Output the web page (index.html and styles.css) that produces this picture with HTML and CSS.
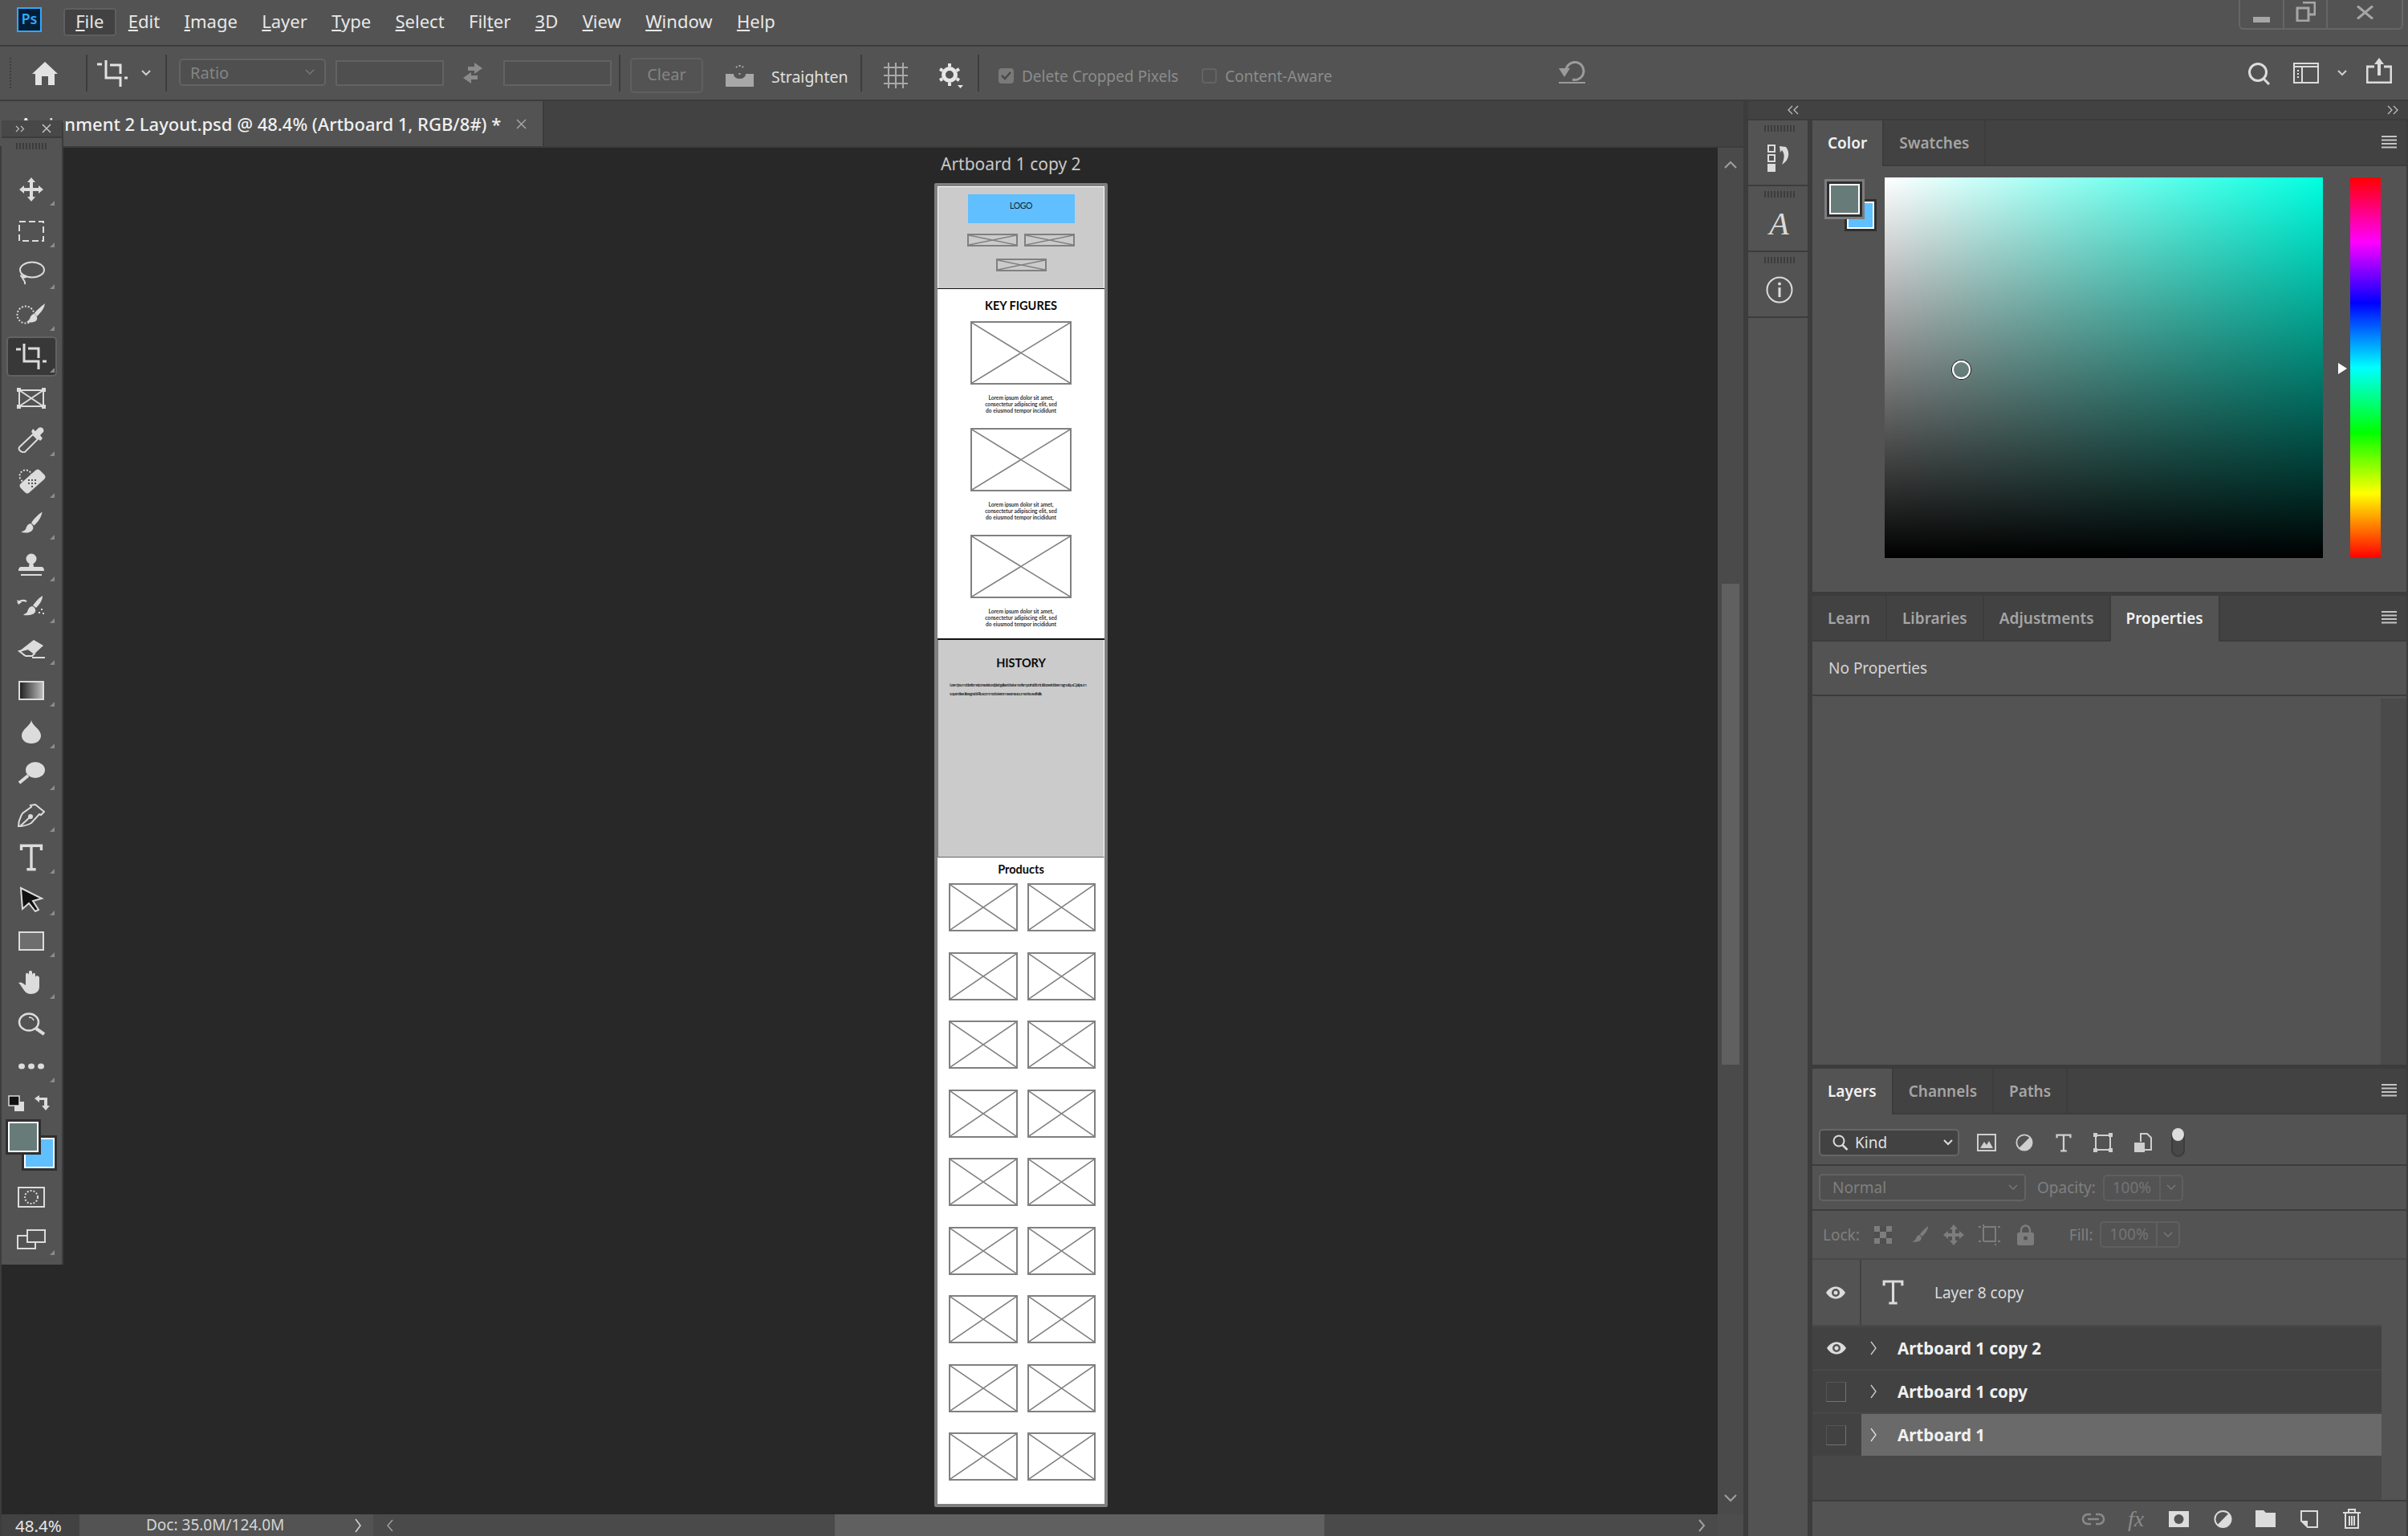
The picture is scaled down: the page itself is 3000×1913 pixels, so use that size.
FILE: index.html
```html
<!DOCTYPE html>
<html lang="en">
  <head>
    <meta charset="utf-8">
    <title>Photoshop</title>
    <link rel="stylesheet" href="styles.css">
  </head>
  <body>
    <svg class="defs" width="0" height="0">
      <symbol id="cross" viewBox="0 0 100 100" preserveAspectRatio="none">
        <path d="M0 0L100 100M100 0L0 100" fill="none" stroke="#808080" stroke-width="1.5" vector-effect="non-scaling-stroke"/>
      </symbol>
      <symbol id="brush" viewBox="0 0 40 40">
        <path d="M36 3c-5 3-13 11-16 16l4 4c5-4 11-12 12-20zM19 20c-5 1-6 5-7 8-1 2-4 3-7 5 7 1 14 1 17-4 2-3 0-7-3-9z" fill="currentColor"/>
      </symbol>
      <symbol id="burger" viewBox="0 0 20 16">
        <path d="M0 1h19M0 5.5h19M0 10h19M0 14.5h19" stroke="currentColor" stroke-width="2"/>
      </symbol>
      <symbol id="eye" viewBox="0 0 26 18">
        <path d="M1 9c6-10 18-10 24 0-6 10-18 10-24 0z" fill="#dcdcdc"/>
        <circle cx="13" cy="9" r="5" fill="#535353"/>
        <circle cx="13" cy="9" r="2.5" fill="#dcdcdc"/>
      </symbol>
      <symbol id="halfcircle" viewBox="0 0 24 24">
        <circle cx="12" cy="12" r="10.5" fill="none" stroke="currentColor" stroke-width="2"/>
        <path d="M4.5 19.5L19.5 4.5a10.5 10.5 0 0 1-15 15z" fill="currentColor"/>
      </symbol>
      <symbol id="typeT" viewBox="0 0 26 30">
        <path d="M2 7V2h22v5M13 2v26M8 28h10" fill="none" stroke="currentColor" stroke-width="3"/>
      </symbol>
    </svg>

    <header class="menubar">
      <div class="ps-logo">Ps</div>
      <nav class="menu">
        <span class="menu-item active"><u>F</u>ile</span>
        <span class="menu-item"><u>E</u>dit</span>
        <span class="menu-item"><u>I</u>mage</span>
        <span class="menu-item"><u>L</u>ayer</span>
        <span class="menu-item"><u>T</u>ype</span>
        <span class="menu-item"><u>S</u>elect</span>
        <span class="menu-item">Fil<u>t</u>er</span>
        <span class="menu-item"><u>3</u>D</span>
        <span class="menu-item"><u>V</u>iew</span>
        <span class="menu-item"><u>W</u>indow</span>
        <span class="menu-item"><u>H</u>elp</span>
      </nav>
      <div class="winbtns">
        <span class="winbtn win-min"><svg width="22" height="10"><rect y="2" width="21" height="7" fill="#a6a6a6"/></svg></span>
        <span class="winbtn win-max"><svg width="25" height="25" viewBox="0 0 25 25"><path d="M9 1h15v15h-8M2 8h14v16H2z" fill="none" stroke="#a6a6a6" stroke-width="3"/></svg></span>
        <span class="winbtn win-close"><svg width="21" height="17" viewBox="0 0 21 17"><path d="M1 0.5L20 16.5M20 0.5L1 16.5" stroke="#a6a6a6" stroke-width="3"/></svg></span>
      </div>
    </header>

    <section class="optionsbar">
      <div class="opt-grip"></div>
      <svg class="opt-home" width="32" height="29" viewBox="0 0 32 29"><path d="M16 0L32 15h-4v14h-8V18h-8v11H4V15H0z" fill="#e2e2e2"/></svg>
      <i class="opt-sep sep-home"></i>
      <svg class="opt-crop" width="38" height="33" viewBox="0 0 38 33"><path d="M0 5h6M11 0v22h18v11M16 6h13v11M34 22h4" fill="none" stroke="#e2e2e2" stroke-width="3"/></svg>
      <svg class="opt-chev" width="12" height="8" viewBox="0 0 12 8"><path d="M1 1l5 5 5-5" fill="none" stroke="#cfcfcf" stroke-width="2"/></svg>
      <i class="opt-sep sep-crop"></i>
      <div class="dim-select">Ratio<svg width="12" height="8" viewBox="0 0 12 8"><path d="M1 1l5 5 5-5" fill="none" stroke="#777" stroke-width="1.5"/></svg></div>
      <div class="dim-input first"></div>
      <svg class="opt-swap" width="28" height="26" viewBox="0 0 28 26"><path d="M16 0l10 7-10 7v-4H8V5h8zM12 12v4h8v5h-8v5L2 19z" fill="#8b8b8b"/></svg>
      <div class="dim-input second"></div>
      <i class="opt-sep sep-input"></i>
      <div class="clear-btn">Clear</div>
      <svg class="opt-level" width="35" height="27" viewBox="0 0 35 27"><path d="M0 11h10c0 8 15 8 15 0h10v16H0z" fill="#a8a8a8"/><path d="M13 3a6 6 0 0 1 9 0M17.5 12v-3" fill="none" stroke="#a8a8a8" stroke-width="2" stroke-dasharray="2 2"/></svg>
      <span class="opt-label">Straighten</span>
      <i class="opt-sep sep-level"></i>
      <svg class="opt-grid" width="30" height="32" viewBox="0 0 30 32"><path d="M6 0v32M15 0v32M24 0v32M0 6h30M0 16h30M0 26h30" fill="none" stroke="#a8a8a8" stroke-width="2"/></svg>
      <svg class="opt-gear" width="30" height="32" viewBox="0 0 30 32"><circle cx="13" cy="15" r="7.5" fill="none" stroke="#e6e6e6" stroke-width="5"/><path d="M13 1v28M1 8l24 14M25 8L1 22" stroke="#e6e6e6" stroke-width="4" stroke-dasharray="4 20"/><path d="M23 28h7l-3.5 4z" fill="#e6e6e6"/></svg>
      <i class="opt-sep sep-gear"></i>
      <span class="check on"><svg width="13" height="11" viewBox="0 0 13 11"><path d="M1 5l4 4 7-8" fill="none" stroke="#4a4a4a" stroke-width="2.5"/></svg></span>
      <span class="opt-dim label-delete">Delete Cropped Pixels</span>
      <span class="check off"></span>
      <span class="opt-dim label-content">Content-Aware</span>
      <svg class="opt-undo" width="34" height="28" viewBox="0 0 34 28"><path d="M10 13a11 11 0 1 1 8 10" fill="none" stroke="#9b9b9b" stroke-width="3"/><path d="M1 9h14l-7 11z" fill="#9b9b9b"/><path d="M1 27h33" stroke="#9b9b9b" stroke-width="2"/></svg>
      <svg class="opt-search" width="29" height="29" viewBox="0 0 29 29"><circle cx="13" cy="13" r="10.5" fill="none" stroke="#dcdcdc" stroke-width="3"/><path d="M20 21l7 7" stroke="#dcdcdc" stroke-width="3"/></svg>
      <svg class="opt-work" width="32" height="26" viewBox="0 0 32 26"><path d="M1 1h30v24H1zM1 5h30M11 5v20" fill="none" stroke="#dcdcdc" stroke-width="2"/><path d="M5 10h2M5 14h2M5 18h2" stroke="#dcdcdc" stroke-width="2"/></svg>
      <svg class="opt-chev2" width="12" height="8" viewBox="0 0 12 8"><path d="M1 1l5 5 5-5" fill="none" stroke="#cfcfcf" stroke-width="2"/></svg>
      <svg class="opt-share" width="32" height="32" viewBox="0 0 32 32"><path d="M10 11H1v20h30V11h-9" fill="none" stroke="#dcdcdc" stroke-width="3"/><path d="M16 0l6 8h-4v14h-4V8h-4z" fill="#dcdcdc"/></svg>
    </section>

    <main class="workspace">
      <div class="doc">
        <div class="tabbar">
          <div class="doc-tab">
            <span class="doc-title">Assignment 2 Layout.psd @ 48.4% (Artboard 1, RGB/8#) *</span>
            <svg width="13" height="13" viewBox="0 0 13 13"><path d="M1 1l11 11M12 1L1 12" stroke="#a5a5a5" stroke-width="1.5"/></svg>
          </div>
        </div>
        <div class="stage">
          <div class="canvas">
            <div class="artboard-label">Artboard 1 copy 2</div>
            <div class="artboard">
              <div class="ab-head">
                <div class="ab-logo">LOGO</div>
                <div class="ab-nav">
                  <svg class="ph"><use href="#cross"/></svg>
                  <svg class="ph"><use href="#cross"/></svg>
                  <svg class="ph"><use href="#cross"/></svg>
                </div>
              </div>
              <div class="ab-figures">
                <h2 class="ab-title">KEY FIGURES</h2>
                <div class="figure">
                  <svg class="ph"><use href="#cross"/></svg>
                  <p>Lorem ipsum dolor sit amet,<br>consectetur adipiscing elit, sed<br>do eiusmod tempor incididunt</p>
                </div>
                <div class="figure">
                  <svg class="ph"><use href="#cross"/></svg>
                  <p>Lorem ipsum dolor sit amet,<br>consectetur adipiscing elit, sed<br>do eiusmod tempor incididunt</p>
                </div>
                <div class="figure">
                  <svg class="ph"><use href="#cross"/></svg>
                  <p>Lorem ipsum dolor sit amet,<br>consectetur adipiscing elit, sed<br>do eiusmod tempor incididunt</p>
                </div>
              </div>
              <div class="ab-history">
                <h2 class="ab-title">HISTORY</h2>
                <p>Lorem ipsum dolor sit amet, consectetur adipiscing elit, sed do eiusmod tempor incididunt ut labore et dolore magna aliqua. Quis ipsum<br>suspendisse ultrices gravida. Risus commodo viverra maecenas accumsan lacus vel facilisis.</p>
              </div>
              <div class="ab-products">
                <h2 class="ab-title">Products</h2>
                <div class="product-grid">
                  <svg class="ph"><use href="#cross"/></svg><svg class="ph"><use href="#cross"/></svg>
                  <svg class="ph"><use href="#cross"/></svg><svg class="ph"><use href="#cross"/></svg>
                  <svg class="ph"><use href="#cross"/></svg><svg class="ph"><use href="#cross"/></svg>
                  <svg class="ph"><use href="#cross"/></svg><svg class="ph"><use href="#cross"/></svg>
                  <svg class="ph"><use href="#cross"/></svg><svg class="ph"><use href="#cross"/></svg>
                  <svg class="ph"><use href="#cross"/></svg><svg class="ph"><use href="#cross"/></svg>
                  <svg class="ph"><use href="#cross"/></svg><svg class="ph"><use href="#cross"/></svg>
                  <svg class="ph"><use href="#cross"/></svg><svg class="ph"><use href="#cross"/></svg>
                  <svg class="ph"><use href="#cross"/></svg><svg class="ph"><use href="#cross"/></svg>
                </div>
              </div>
            </div>
          </div>
          <div class="vscroll">
            <svg width="16" height="10" viewBox="0 0 16 10"><path d="M1 9l7-7 7 7" fill="none" stroke="#a0a0a0" stroke-width="2"/></svg>
            <div class="vthumb"></div>
            <svg width="16" height="10" viewBox="0 0 16 10"><path d="M1 1l7 7 7-7" fill="none" stroke="#a0a0a0" stroke-width="2"/></svg>
          </div>
        </div>
        <div class="statusbar">
          <div class="zoom-val">48.4%</div>
          <div class="doc-size">Doc: 35.0M/124.0M
            <svg width="8" height="18" viewBox="0 0 8 18"><path d="M1 1l6 8-6 8" fill="none" stroke="#d5d5d5" stroke-width="1.5"/></svg>
          </div>
          <div class="hscroll">
            <svg width="9" height="16" viewBox="0 0 9 16"><path d="M8 1L2 8l6 7" fill="none" stroke="#a0a0a0" stroke-width="1.5"/></svg>
            <div class="hthumb"></div>
            <svg width="9" height="16" viewBox="0 0 9 16"><path d="M1 1l6 7-6 7" fill="none" stroke="#a0a0a0" stroke-width="2"/></svg>
          </div>
          <div class="corner"></div>
        </div>
      </div>

      <div class="side">
        <div class="collapse-strip">
          <svg class="coll-left" width="14" height="12" viewBox="0 0 14 12"><path d="M6 1L1 6l5 5M13 1L8 6l5 5" fill="none" stroke="#bdbdbd" stroke-width="1.3"/></svg>
          <svg class="coll-right" width="14" height="12" viewBox="0 0 14 12"><path d="M1 1l5 5-5 5M8 1l5 5-5 5" fill="none" stroke="#bdbdbd" stroke-width="1.3"/></svg>
        </div>
        <div class="side-body">
          <div class="dock">
            <div class="dock-item">
              <div class="grip"></div>
              <svg width="30" height="34" viewBox="0 0 30 34"><path d="M1 1h8v8H1zM1 13h8v8H1z" fill="none" stroke="#dcdcdc" stroke-width="2"/><rect y="24" width="10" height="10" fill="#dcdcdc"/><path d="M15 2l8 1c5 6 5 16-5 22 3-7 4-13 0-18l-2 3z" fill="#dcdcdc"/></svg>
            </div>
            <div class="dock-item">
              <div class="grip"></div>
              <span class="dock-a">A</span>
            </div>
            <div class="dock-item">
              <div class="grip"></div>
              <svg width="34" height="34" viewBox="0 0 34 34"><circle cx="17" cy="17" r="15.5" fill="none" stroke="#dcdcdc" stroke-width="2"/><path d="M17 14v12" stroke="#dcdcdc" stroke-width="3"/><circle cx="17" cy="9.5" r="2" fill="#dcdcdc"/></svg>
            </div>
            <div class="dock-rest"></div>
          </div>

          <div class="panels">
            <section class="panel panel-color">
              <div class="tabs">
                <span class="tab on">Color</span>
                <span class="tab">Swatches</span>
                <svg class="burger"><use href="#burger"/></svg>
              </div>
              <div class="color-body">
                <div class="swatch-pair">
                  <span class="sw-bg"></span>
                  <span class="sw-fg"></span>
                </div>
                <div class="color-field"><span class="color-pick"></span></div>
                <div class="hue-bar"><span class="hue-mark"></span></div>
              </div>
            </section>

            <section class="panel panel-props">
              <div class="tabs">
                <span class="tab">Learn</span>
                <span class="tab">Libraries</span>
                <span class="tab">Adjustments</span>
                <span class="tab on">Properties</span>
                <svg class="burger"><use href="#burger"/></svg>
              </div>
              <div class="props-head">No Properties</div>
              <div class="props-body"><div class="props-strip"></div></div>
            </section>

            <section class="panel panel-layers">
              <div class="tabs">
                <span class="tab on">Layers</span>
                <span class="tab">Channels</span>
                <span class="tab">Paths</span>
                <svg class="burger"><use href="#burger"/></svg>
              </div>
              <div class="row-kind">
                <div class="kind-select">
                  <svg width="20" height="20" viewBox="0 0 20 20"><circle cx="8" cy="8" r="6.5" fill="none" stroke="#dcdcdc" stroke-width="2"/><path d="M12.5 13l6 6" stroke="#dcdcdc" stroke-width="2.5"/></svg>
                  <span>Kind</span>
                  <svg class="sel-chev" width="12" height="8" viewBox="0 0 12 8"><path d="M1 1l5 5 5-5" fill="none" stroke="#dcdcdc" stroke-width="2"/></svg>
                </div>
                <svg class="ki ki-img" width="24" height="24" viewBox="0 0 24 24"><path d="M1 2h22v20H1z" fill="none" stroke="#cfcfcf" stroke-width="2"/><path d="M4 19l5-8 3 4 3-5 5 9z" fill="#cfcfcf"/></svg>
                <svg class="ki ki-adj" width="22" height="24"><use href="#halfcircle"/></svg>
                <svg class="ki ki-t" width="20" height="23"><use href="#typeT"/></svg>
                <svg class="ki ki-shape" width="24" height="24" viewBox="0 0 24 24"><path d="M3 3h18v18H3z" fill="none" stroke="#cfcfcf" stroke-width="2"/><path d="M0 0h5v5H0zM19 0h5v5h-5zM0 19h5v5H0zM19 19h5v5h-5z" fill="#cfcfcf"/></svg>
                <svg class="ki ki-smart" width="22" height="24" viewBox="0 0 22 24"><path d="M8 11V1h8l5 5v15h-8" fill="none" stroke="#cfcfcf" stroke-width="2"/><rect y="12" width="13" height="12" fill="#cfcfcf"/></svg>
                <span class="ki-toggle"></span>
              </div>
              <div class="row-blend">
                <div class="blend-select">Normal<svg width="12" height="8" viewBox="0 0 12 8"><path d="M1 1l5 5 5-5" fill="none" stroke="#777" stroke-width="1.5"/></svg></div>
                <span class="dim-label">Opacity:</span>
                <div class="num-field"><span>100%</span><i><svg width="12" height="8" viewBox="0 0 12 8"><path d="M1 1l5 5 5-5" fill="none" stroke="#777" stroke-width="1.5"/></svg></i></div>
              </div>
              <div class="row-lock">
                <span class="dim-label lock-label">Lock:</span>
                <svg class="li" width="22" height="22" viewBox="0 0 22 22"><rect width="22" height="22" fill="#7d7d7d"/><path d="M7 0h8v7H7zM15 7h7v8h-7zM0 7h7v8H0zM7 15h8v7H7z" fill="#4f4f4f"/></svg>
                <svg class="li li-brush" width="26" height="26"><use href="#brush"/></svg>
                <svg class="li li-move" width="26" height="26" viewBox="0 0 26 26"><path d="M13 0l5 6h-3v5h5V8l6 5-6 5v-3h-5v5h3l-5 6-5-6h3v-5H6v3l-6-5 6-5v3h5V6H8z" fill="#7d7d7d"/></svg>
                <svg class="li li-art" width="27" height="26" viewBox="0 0 27 26"><path d="M6 3h15v18H6" fill="none" stroke="#7d7d7d" stroke-width="2"/><path d="M6 3v18" stroke="#7d7d7d" stroke-width="2"/><path d="M0 3h3M24 3h3M0 21h3M24 21h3M6 0v2M21 24v2" stroke="#7d7d7d" stroke-width="2"/></svg>
                <svg class="li li-lock" width="21" height="26" viewBox="0 0 21 26"><path d="M5 11V7a5.5 5.5 0 0 1 11 0v4" fill="none" stroke="#7d7d7d" stroke-width="2.5"/><rect y="10" width="21" height="16" rx="2" fill="#7d7d7d"/><circle cx="10.5" cy="17" r="2.5" fill="#535353"/></svg>
                <span class="dim-label fill-label">Fill:</span>
                <div class="num-field"><span>100%</span><i><svg width="12" height="8" viewBox="0 0 12 8"><path d="M1 1l5 5 5-5" fill="none" stroke="#777" stroke-width="1.5"/></svg></i></div>
              </div>
              <div class="layer-list">
                <div class="layer layer-text">
                  <span class="vis"><svg width="26" height="18"><use href="#eye"/></svg></span>
                  <span class="thumb-t"><svg width="27" height="31"><use href="#typeT"/></svg></span>
                  <span class="layer-name">Layer 8 copy</span>
                </div>
                <div class="layer group">
                  <span class="vis"><svg width="26" height="18"><use href="#eye"/></svg></span>
                  <svg class="twist" width="8" height="18" viewBox="0 0 8 18"><path d="M1 1l6 8-6 8" fill="none" stroke="#cfcfcf" stroke-width="1.3"/></svg>
                  <span class="layer-name">Artboard 1 copy 2</span>
                </div>
                <div class="layer group">
                  <span class="vis"><i class="vis-box"></i></span>
                  <svg class="twist" width="8" height="18" viewBox="0 0 8 18"><path d="M1 1l6 8-6 8" fill="none" stroke="#cfcfcf" stroke-width="1.3"/></svg>
                  <span class="layer-name">Artboard 1 copy</span>
                </div>
                <div class="layer group selected">
                  <span class="vis"><i class="vis-box"></i></span>
                  <span class="sel-fill">
                    <svg class="twist" width="8" height="18" viewBox="0 0 8 18"><path d="M1 1l6 8-6 8" fill="none" stroke="#e0e0e0" stroke-width="1.3"/></svg>
                    <span class="layer-name">Artboard 1</span>
                  </span>
                </div>
              </div>
              <div class="layer-foot">
                <svg class="fi fi-link" width="30" height="16" viewBox="0 0 30 16"><path d="M12 2H8a6 6 0 0 0 0 12h4M18 2h4a6 6 0 0 1 0 12h-4M8 8h14" fill="none" stroke="#8a8a8a" stroke-width="2.5"/></svg>
                <span class="fi-fx">fx</span>
                <svg class="fi fi-mask" width="25" height="20" viewBox="0 0 25 20"><rect width="25" height="20" fill="#dcdcdc"/><circle cx="12.5" cy="10" r="6" fill="#535353"/></svg>
                <svg class="fi fi-adj" width="23" height="24"><use href="#halfcircle"/></svg>
                <svg class="fi fi-folder" width="25" height="21" viewBox="0 0 25 21"><path d="M0 0h10l3 3h12v18H0z" fill="#dcdcdc"/></svg>
                <svg class="fi fi-new" width="22" height="22" viewBox="0 0 22 22"><path d="M1 1h20v20H9L1 13z" fill="none" stroke="#dcdcdc" stroke-width="2"/><path d="M1 13h8v8z" fill="#dcdcdc"/></svg>
                <svg class="fi fi-trash" width="22" height="25" viewBox="0 0 22 25"><path d="M0 5h22M7 4V1h8v3M3 6v18h16V6M8 9v12M11 9v12M14 9v12" fill="none" stroke="#dcdcdc" stroke-width="2"/></svg>
              </div>
            </section>
          </div>
        </div>
      </div>

      <aside class="toolbar">
        <div class="tb-head">
          <svg width="12" height="9" viewBox="0 0 12 9"><path d="M1 1l3.5 3.5L1 8M7 1l3.5 3.5L7 8" fill="none" stroke="#bdbdbd" stroke-width="1.2"/></svg>
          <svg width="12" height="12" viewBox="0 0 12 12"><path d="M1 1l10 10M11 1L1 11" stroke="#c5c5c5" stroke-width="1.5"/></svg>
        </div>
        <div class="tb-grip"><div class="grip"></div></div>
        <div class="tool more"><svg width="32" height="32" viewBox="0 0 32 32"><path d="M16 1l5 6h-3v7h7v-3l6 5-6 5v-3h-7v7h3l-5 6-5-6h3v-7H7v3l-6-5 6-5v3h7V7h-3z" fill="#dcdcdc"/></svg></div>
        <div class="tool more"><svg width="32" height="26" viewBox="0 0 32 26"><rect x="1" y="1" width="30" height="24" fill="none" stroke="#dcdcdc" stroke-width="2" stroke-dasharray="8 4"/></svg></div>
        <div class="tool more"><svg width="34" height="30" viewBox="0 0 34 30"><ellipse cx="18" cy="11" rx="15" ry="9.5" fill="none" stroke="#dcdcdc" stroke-width="2"/><path d="M5 17c-3 3 3 4 5 3s-5-3-4 1 4 3 3 8" fill="none" stroke="#dcdcdc" stroke-width="2"/></svg></div>
        <div class="tool more"><svg width="38" height="30" viewBox="0 0 38 30"><circle cx="12" cy="15" r="10.5" fill="none" stroke="#dcdcdc" stroke-width="2" stroke-dasharray="2 2"/><path d="M36 1c-4 3-10 8-13 12l3 4c4-4 9-9 10-16zM22 14c-3 1-4 3-5 6-1 2-3 3-4 4 5 1 11 1 13-3 1-3-1-6-4-7z" fill="#dcdcdc"/></svg></div>
        <div class="tool more on"><svg width="38" height="32" viewBox="0 0 38 32"><path d="M0 7h6M10 0v22h18v10M15 6h13v12M33 22h5" fill="none" stroke="#dcdcdc" stroke-width="3"/></svg></div>
        <div class="tool"><svg width="36" height="26" viewBox="0 0 36 26"><path d="M3 3h30v20H3zM3 3l30 20M33 3L3 23" fill="none" stroke="#dcdcdc" stroke-width="2"/><path d="M0 0h5v5H0zM31 0h5v5h-5zM0 21h5v5H0zM31 21h5v5h-5z" fill="#dcdcdc"/></svg></div>
        <div class="tool more"><svg width="34" height="32" viewBox="0 0 34 32"><path d="M2 25L19 9l6 6L9 31c-3 1-9-2-7-6z" fill="none" stroke="#dcdcdc" stroke-width="2"/><path d="M17 6l11 11 3-3-3-4 4-4c2-4-3-7-6-5l-4 4-3-3z" fill="#dcdcdc"/></svg></div>
        <div class="tool more"><svg width="36" height="32" viewBox="0 0 36 32"><circle cx="11" cy="9" r="7.5" fill="none" stroke="#dcdcdc" stroke-width="2" stroke-dasharray="2 2"/><path d="M29 2l5 5c2 2 2 4 0 6L16 29c-2 2-4 2-6 0l-5-5c-2-2-2-4 0-6L23 2c2-2 4-2 6 0z" fill="#dcdcdc"/><path d="M14 18h2M18 14h2M18 18h2M22 18h2M18 22h2M14 14h2M22 14h2" stroke="#535353" stroke-width="2"/></svg></div>
        <div class="tool more"><svg width="34" height="34"><use href="#brush"/></svg></div>
        <div class="tool more"><svg width="32" height="30" viewBox="0 0 32 30"><circle cx="16" cy="7" r="6.5" fill="#dcdcdc"/><path d="M14 10h4l1 7h9c3 0 4 2 4 5H0c0-3 1-5 4-5h9z" fill="#dcdcdc"/><path d="M3 27h26" stroke="#dcdcdc" stroke-width="2"/></svg></div>
        <div class="tool more"><svg width="36" height="30" viewBox="0 0 36 30"><path d="M32 1c-4 2-9 8-12 12l4 3c4-4 8-9 8-15zM19 14c-4 1-5 4-6 7-1 2-3 2-5 4 6 1 13 0 15-4 1-3-1-6-4-7z" fill="#dcdcdc"/><path d="M1 10c3-3 7-4 11-2" fill="none" stroke="#dcdcdc" stroke-width="2"/><path d="M0 6l2 6 4-3z" fill="#dcdcdc"/><path d="M30 18h2M27 22h2M32 23h2" stroke="#dcdcdc" stroke-width="2"/></svg></div>
        <div class="tool more"><svg width="34" height="24" viewBox="0 0 34 24"><path d="M2 15L20 1l12 7-14 13H8z" fill="#dcdcdc"/><path d="M2 15l8 6h8l3-3-8-6z" fill="#535353" stroke="#dcdcdc" stroke-width="2"/><path d="M18 23h16" stroke="#dcdcdc" stroke-width="2"/></svg></div>
        <div class="tool more"><span class="gradient-swatch"></span></div>
        <div class="tool more"><svg width="24" height="30" viewBox="0 0 24 30"><path d="M12 0c1 7 12 11 12 19 0 6-5 10-12 10S0 25 0 19C0 11 11 7 12 0z" fill="#dcdcdc"/></svg></div>
        <div class="tool more"><svg width="34" height="32" viewBox="0 0 34 32"><ellipse cx="22" cy="11" rx="12" ry="10" fill="#dcdcdc"/><path d="M13 18L2 27" stroke="#dcdcdc" stroke-width="4"/></svg></div>
        <div class="tool more"><svg width="34" height="30" viewBox="0 0 34 30"><path d="M22 1l11 9-4 4-2-1-10 11c-5 3-11 4-16 4 0-5 2-11 5-16l11-8-1-2z" fill="none" stroke="#dcdcdc" stroke-width="2"/><path d="M3 28l12-11" stroke="#dcdcdc" stroke-width="2"/><circle cx="16" cy="16" r="3" fill="#dcdcdc"/></svg></div>
        <div class="tool more"><svg width="30" height="34"><use href="#typeT"/></svg></div>
        <div class="tool more"><svg width="32" height="32" viewBox="0 0 32 32"><path d="M3 2l26 13-11 3 7 11-4 2-8-10-8 7z" fill="#111" stroke="#dcdcdc" stroke-width="2"/></svg></div>
        <div class="tool more"><svg width="32" height="24" viewBox="0 0 32 24"><rect x="1" y="1" width="30" height="22" fill="#6e6e6e" stroke="#dcdcdc" stroke-width="2"/></svg></div>
        <div class="tool more"><svg width="32" height="30" viewBox="0 0 32 30"><path d="M0 15c4-2 7 2 9 3V5c0-3 3-3 4 0V2c0-3 4-3 4 0v3c1-3 4-3 4 0v3c1-3 5-2 5 1v11c0 6-5 9-11 9-8 0-10-10-15-14z" fill="#dcdcdc"/></svg></div>
        <div class="tool"><svg width="34" height="32" viewBox="0 0 34 32"><ellipse cx="14" cy="13" rx="12" ry="10.5" fill="none" stroke="#dcdcdc" stroke-width="2.5"/><path d="M23 21l10 7" stroke="#dcdcdc" stroke-width="4"/><path d="M14 7c3 0 5 1 6 4" fill="none" stroke="#dcdcdc" stroke-width="1.5"/></svg></div>
        <div class="tool more"><svg width="32" height="8" viewBox="0 0 32 8"><ellipse cx="4" cy="4" rx="4" ry="3.5" fill="#dcdcdc"/><ellipse cx="16" cy="4" rx="4" ry="3.5" fill="#dcdcdc"/><ellipse cx="28" cy="4" rx="4" ry="3.5" fill="#dcdcdc"/></svg></div>
        <div class="tb-swap">
          <svg width="20" height="20" viewBox="0 0 20 20"><rect x="8" y="8" width="12" height="12" fill="#dcdcdc"/><rect x="1" y="1" width="13" height="12" fill="#111" stroke="#dcdcdc" stroke-width="1.5"/></svg>
          <svg width="20" height="20" viewBox="0 0 20 20"><path d="M0 4l6-4v3h10v10h3l-5 6-5-6h3V6H6v3z" fill="#dcdcdc"/></svg>
        </div>
        <div class="tb-colors">
          <span class="sw-bg big"></span>
          <span class="sw-fg big"></span>
        </div>
        <div class="tool"><svg width="34" height="26" viewBox="0 0 34 26"><rect x="1" y="1" width="32" height="24" fill="none" stroke="#dcdcdc" stroke-width="2"/><circle cx="17" cy="13" r="8" fill="none" stroke="#dcdcdc" stroke-width="2" stroke-dasharray="2 2"/></svg></div>
        <div class="tool more"><svg width="36" height="26" viewBox="0 0 36 26"><path d="M13 2h22v15H13zM13 9H1v16h22v-8" fill="none" stroke="#dcdcdc" stroke-width="2"/></svg></div>
      </aside>
    </main>
  </body>
</html>
```

FILE: styles.css
```css
* { box-sizing: border-box; }
html, body { margin: 0; height: 100%; }
body {
  width: 3000px;
  height: 1913px;
  overflow: hidden;
  background: #3c3c3c;
  color: #e6e6e6;
  font-family: "Noto Sans", "Open Sans", sans-serif;
  font-size: 20px;
  display: flex;
  flex-direction: column;
}
.defs { position: absolute; }
svg { display: block; flex: none; }

/* menu bar */
.menubar {
  height: 56px;
  background: #535353;
  display: flex;
  align-items: flex-start;
  flex: none;
}
.ps-logo {
  width: 31px;
  height: 31px;
  margin: 9px 27px 0 21px;
  background: #001e36;
  border: 2px solid #31a8ff;
  color: #31a8ff;
  font-size: 18px;
  font-weight: 600;
  line-height: 25px;
  text-align: center;
}
.menu { display: flex; margin-top: 10px; }
.menu-item {
  height: 35px;
  padding: 0 15.2px;
  font-size: 22px;
  line-height: 33px;
  color: #e8e8e8;
}
.menu-item.active {
  background: #424242;
  box-shadow: inset 0 0 0 2px #5f5f5f;
  border-radius: 4px;
}
.winbtns {
  margin-left: auto;
  margin-right: 6px;
  width: 205px;
  height: 37px;
  display: flex;
  border: 2px solid #666;
  border-top: 0;
  border-radius: 0 0 6px 6px;
}
.winbtn { display: flex; align-items: center; justify-content: center; border-right: 2px solid #666; }
.win-min { width: 55px; padding-top: 12px; }
.win-max { width: 54px; padding-bottom: 6px; }
.win-close { flex: 1; border-right: 0; padding-bottom: 4px; }

/* options bar */
.optionsbar {
  height: 66px;
  margin-top: 2px;
  background: #535353;
  display: flex;
  align-items: center;
  flex: none;
  color: #e0e0e0;
}
.opt-grip {
  width: 2px;
  height: 38px;
  margin-left: 12px;
  background: repeating-linear-gradient(180deg, #3c3c3c 0 2px, transparent 2px 4px);
}
.opt-home { margin-left: 26px; }
.opt-sep { display: block; width: 2px; height: 46px; background: #3c3c3c; flex: none; }
.sep-home { margin-left: 35px; }
.opt-crop { margin-left: 12px; }
.opt-chev { margin-left: 17px; }
.sep-crop { margin-left: 18px; }
.dim-select {
  width: 183px;
  height: 34px;
  margin: -2px 0 0 15px;
  padding: 0 12px;
  border: 2px solid #636363;
  border-radius: 5px;
  background: #4f4f4f;
  display: flex;
  align-items: center;
  justify-content: space-between;
  color: #858585;
  font-size: 20px;
}
.dim-input {
  width: 135px;
  height: 32px;
  border: 2px solid #636363;
  background: #4f4f4f;
}
.dim-input.first { margin-left: 12px; }
.opt-swap { margin-left: 22px; margin-right: 24px; }
.sep-input { margin-left: 9px; }
.clear-btn {
  width: 91px;
  height: 44px;
  margin: 6px 0 0 12px;
  border: 2px solid #5f5f5f;
  border-radius: 5px;
  color: #858585;
  font-size: 20px;
  line-height: 38px;
  text-align: center;
}
.opt-level { margin: 6px 0 0 28px; }
.opt-label { margin: 8px 0 0 22px; font-size: 19.5px; width: 93px; white-space: nowrap; }
.sep-level { margin-left: 18px; }
.opt-grid { margin: 6px 0 0 27px; }
.opt-gear { margin: 6px 0 0 39px; }
.sep-gear { margin-left: 18px; }
.check {
  width: 19px;
  height: 19px;
  margin-top: 7px;
  border-radius: 4px;
  display: flex;
  align-items: center;
  justify-content: center;
  flex: none;
}
.check.on { margin-left: 24px; background: #7a7a7a; }
.check.off { margin-left: 29px; border: 2px solid #636363; }
.opt-dim { margin: 8px 0 0 10px; color: #8c8c8c; font-size: 19px; white-space: nowrap; }
.opt-undo { margin: -3px 0 0 281px; }
.opt-search { margin-left: 825px; }
.opt-work { margin-left: 28px; }
.opt-chev2 { margin-left: 23px; }
.opt-share { margin: -6px 0 0 24px; }

/* workspace */
.workspace {
  height: 1787px;
  margin-top: 2px;
  display: flex;
  flex: none;
  position: relative;
}
.doc { width: 2172px; display: flex; flex-direction: column; flex: none; }
.tabbar { height: 56px; background: #424242; flex: none; }
.doc-tab {
  width: 678px;
  height: 56px;
  background: #535353;
  border-right: 2px solid #3c3c3c;
  padding-left: 25px;
  display: flex;
  align-items: center;
  gap: 19px;
}
.doc-title { font-size: 22px; font-weight: 500; color: #f0f0f0; white-space: nowrap; }
.stage { height: 1702px; margin-top: 2px; display: flex; flex: none; }
.canvas {
  width: 2140px;
  background: #282828;
  border-left: 2px solid #3c3c3c;
  padding-left: 1162px;
  overflow: hidden;
}
.artboard-label {
  height: 44px;
  padding: 7px 0 0 8px;
  font-size: 21px;
  line-height: 26px;
  color: #c9c9c9;
  white-space: nowrap;
}
.vscroll {
  width: 32px;
  background: #4a4a4a;
  display: flex;
  flex-direction: column;
  align-items: center;
  padding-top: 16px;
}
.vthumb { width: 22px; height: 599px; margin: 517px 0 535px; background: #606060; }

/* artboard content */
.artboard {
  width: 216px;
  height: 1649px;
  border: 4px solid #7f7f7f;
  border-radius: 2px;
  background: #fff;
  font-family: Lato, "Open Sans", sans-serif;
  color: #111;
  display: flex;
  flex-direction: column;
}
.ph { border: 2px solid #808080; background: transparent; overflow: hidden; }
.ab-head { height: 127px; background: #cbcbcb; padding-top: 9px; border: 1px solid #fff; border-bottom: 0; flex: none; }
.ab-logo {
  width: 133px;
  height: 36px;
  margin: 0 auto;
  background: #5fbfff;
  color: #123;
  font-size: 10.5px;
  letter-spacing: -0.4px;
  line-height: 29px;
  text-align: center;
}
.ab-nav {
  width: 134px;
  margin: 13px auto 0;
  display: flex;
  flex-wrap: wrap;
  justify-content: center;
  gap: 15px 8px;
}
.ab-nav .ph { width: 63px; height: 16px; }
.ab-title { margin: 0; font-size: 14.5px; font-weight: 700; line-height: 20px; text-align: center; color: #0a0a0a; }
.ab-figures {
  height: 438px;
  padding-top: 11px;
  border-top: 1px solid #111;
  border-bottom: 2px solid #111;
  flex: none;
}
.ab-figures .ab-title { margin-bottom: 9px; }
.figure { height: 133px; }
.figure .ph { width: 126px; height: 79px; margin: 0 auto; }
.figure p {
  margin: 12px 0 0;
  font-size: 6.6px;
  font-weight: 700;
  line-height: 8px;
  text-align: center;
  color: #333;
}
.ab-history { height: 271px; background: #cbcbcb; padding-top: 19px; flex: none; border-right: 1px solid #fff; border-left: 1px solid #7f7f7f; border-bottom: 1px solid #666; }
.ab-history p {
  margin: 11px 0 0 14px;
  font-size: 6px;
  line-height: 11px;
  letter-spacing: -1.37px;
  white-space: nowrap;
  color: #333;
}
.ab-products { flex: 1; padding-top: 5px; }
.product-grid {
  margin: 7px 0 0 14px;
  display: grid;
  grid-template-columns: 86px 85px;
  grid-auto-rows: 60px;
  gap: 25.5px 12px;
}
.product-grid .ph { width: 100%; height: 100%; }

/* status bar */
.statusbar { height: 27px; display: flex; flex: none; overflow: hidden; }
.zoom-val {
  width: 99px;
  padding-left: 17px;
  background: #424242;
  border-left: 2px solid #3c3c3c;
  font-size: 20.5px;
  line-height: 29px;
  color: #e6e6e6;
}
.doc-size {
  width: 366px;
  padding-left: 83px;
  background: #535353;
  font-size: 19px;
  line-height: 29px;
  color: #d5d5d5;
  display: flex;
  align-items: center;
  white-space: nowrap;
}
.doc-size svg { margin-left: 88px; }
.hscroll {
  width: 1675px;
  background: #4a4a4a;
  display: flex;
  align-items: center;
  padding-left: 16px;
}
.hthumb { width: 610px; height: 27px; margin: 0 466px 0 550px; background: #606060; }
.corner { width: 32px; background: #4d4d4d; }

/* right side */
.side { width: 828px; padding-left: 6px; display: flex; flex-direction: column; flex: none; }
.collapse-strip {
  height: 22px;
  background: #424242;
  display: flex;
  align-items: center;
  justify-content: space-between;
  padding: 0 12px 0 49px;
  flex: none;
}
.side-body { height: 1763px; margin-top: 2px; display: flex; flex: none; }
.dock { width: 74px; margin-right: 6px; display: flex; flex-direction: column; gap: 2px; flex: none; }
.dock-item {
  height: 80px;
  background: #535353;
  padding: 6px 0 0 3px;
  display: flex;
  flex-direction: column;
  align-items: center;
  flex: none;
}
.dock-item svg { margin-top: 16px; }
.dock-a {
  margin-top: 11px;
  font-family: "Liberation Serif", serif;
  font-style: italic;
  font-size: 40px;
  line-height: 44px;
  color: #dcdcdc;
}
.dock-rest { flex: 1; background: #535353; }
.grip {
  width: 38px;
  height: 8px;
  background: repeating-linear-gradient(90deg, #3c3c3c 0 2px, transparent 2px 4px);
}

.panels { width: 740px; display: flex; flex-direction: column; flex: none; }
.panel { background: #535353; flex: none; display: flex; flex-direction: column; }
.panel-color { height: 587px; }
.panel-props { height: 584px; margin-top: 5px; }
.panel-layers { height: 582px; margin-top: 5px; }
.tabs {
  height: 57px;
  background: #424242;
  border-bottom: 2px solid #3c3c3c;
  display: flex;
  position: relative;
  flex: none;
}
.tab {
  padding: 0 19px;
  font-size: 19px;
  font-weight: 600;
  line-height: 56px;
  color: #a5a5a5;
  border-right: 2px solid #3c3c3c;
  white-space: nowrap;
}
.tab.on { background: #535353; color: #f2f2f2; height: 57px; }
.burger { position: absolute; right: 11px; top: 19px; width: 20px; height: 16px; color: #c5c5c5; }

.color-body { position: relative; flex: 1; }
.swatch-pair { position: absolute; left: 18px; top: 19px; width: 62px; height: 62px; }
.sw-fg, .sw-bg { position: absolute; display: block; border: 2px solid #fff; box-shadow: 0 0 0 3px #2f2f2f; }
.sw-fg { left: 3px; top: 3px; width: 38px; height: 38px; background: #677c79; outline: 3px solid #7d7d7d; outline-offset: 3px; }
.sw-bg { left: 25px; top: 25px; width: 34px; height: 34px; background: #5fbfff; }
.color-field {
  position: absolute;
  left: 90px;
  top: 14px;
  width: 546px;
  height: 474px;
  background:
    linear-gradient(to top, #000, rgba(0, 0, 0, 0)),
    linear-gradient(to right, #fff, #00ffe0);
}
.color-pick {
  position: absolute;
  left: 84px;
  top: 228px;
  width: 23px;
  height: 23px;
  border: 2px solid #fff;
  border-radius: 50%;
  box-shadow: 0 0 0 1px #222;
}
.hue-bar {
  position: absolute;
  left: 670px;
  top: 14px;
  width: 38px;
  height: 474px;
  background: linear-gradient(to bottom, #f00, #f0f 17%, #00f 33%, #0ff 50%, #0f0 67%, #ff0 83%, #f00);
}
.hue-mark {
  position: absolute;
  left: -15px;
  top: 231px;
  width: 0;
  height: 0;
  border-left: 11px solid #fff;
  border-top: 7px solid transparent;
  border-bottom: 7px solid transparent;
}

.props-head {
  height: 68px;
  padding-left: 20px;
  display: flex;
  align-items: center;
  font-size: 19px;
  color: #d5d5d5;
  border-bottom: 2px solid #3c3c3c;
  flex: none;
}
.props-body { flex: 1; display: flex; justify-content: flex-end; padding-top: 3px; }
.props-strip { width: 32px; background: #4a4a4a; }

/* layers */
.row-kind, .row-blend, .row-lock { display: flex; align-items: center; border-bottom: 2px solid #3c3c3c; flex: none; padding-left: 8px; }
.row-kind { height: 64px; padding-top: 8px; }
.row-blend { height: 56px; }
.row-lock { height: 61px; border-bottom-color: #484848; }
.kind-select {
  width: 175px;
  height: 34px;
  background: #424242;
  border: 2px solid #666;
  border-radius: 5px;
  display: flex;
  align-items: center;
  padding: 0 6px 0 15px;
  gap: 8px;
  font-size: 19px;
  color: #e0e0e0;
}
.sel-chev { margin-left: auto; }
.ki { color: #cfcfcf; }
.ki-img { margin-left: 22px; }
.ki-adj { margin-left: 24px; }
.ki-t { margin-left: 28px; }
.ki-shape { margin-left: 27px; }
.ki-smart { margin-left: 27px; }
.ki-toggle {
  margin-left: 24px;
  width: 17px;
  height: 35px;
  border: 2px solid #3c3c3c;
  border-radius: 9px;
  position: relative;
  background: #484848;
}
.ki-toggle::before {
  content: "";
  position: absolute;
  left: -1px;
  top: -3px;
  width: 15px;
  height: 16px;
  border-radius: 50%;
  background: #dcdcdc;
}
.blend-select {
  width: 258px;
  height: 34px;
  border: 2px solid #636363;
  border-radius: 5px;
  background: #4f4f4f;
  padding: 0 8px 0 15px;
  display: flex;
  align-items: center;
  justify-content: space-between;
  font-size: 19px;
  color: #808080;
}
.dim-label { font-size: 19px; color: #808080; white-space: nowrap; }
.row-blend .dim-label { margin-left: 14px; margin-right: 9px; }
.num-field {
  width: 100px;
  height: 33px;
  border: 2px solid #5f5f5f;
  border-radius: 5px;
  display: flex;
  font-size: 19px;
  color: #737373;
}
.num-field span { width: 70px; text-align: center; line-height: 28px; border-right: 2px solid #5f5f5f; }
.num-field i { flex: 1; display: flex; align-items: center; justify-content: center; }
.lock-label { margin-left: 5px; }
.li { margin-left: 18px; }
.li-brush { margin-left: 22px; color: #7d7d7d; }
.li-move { margin-left: 16px; }
.li-art { margin-left: 18px; }
.li-lock { margin-left: 21px; }
.fill-label { margin-left: 44px; margin-right: 9px; }

.layer-list { height: 299px; background: #484848; width: 709px; flex: none; display: flex; flex-direction: column; }
.layer { display: flex; align-items: center; flex: none; }
.layer-text { height: 81px; background: #535353; margin-bottom: 3px; }
.group { height: 52px; background: #424242; margin-bottom: 2px; }
.vis {
  width: 61px;
  align-self: stretch;
  display: flex;
  align-items: center;
  justify-content: center;
  padding-right: 2px;
  flex: none;
}
.layer-text .vis { border-right: 2px solid #424242; }
.vis-box { display: block; width: 25px; height: 25px; border-right: 1px solid #727272; border-bottom: 1px solid #727272; border-left: 1px solid #555; border-top: 1px solid #555; }
.thumb-t { margin-left: 26px; color: #dcdcdc; }
.layer-text .layer-name { margin-left: 38px; font-weight: 400; color: #dcdcdc; font-size: 19px; }
.twist { margin-left: 11px; }
.layer-name { margin-left: 26px; font-size: 20.5px; font-weight: 700; color: #f0f0f0; white-space: nowrap; }
.sel-fill { flex: 1; align-self: stretch; background: #6a6a6a; display: flex; align-items: center; }
.sel-fill .twist { margin-left: 11px; }
.layer-foot {
  height: 45px;
  border-top: 2px solid #3c3c3c;
  display: flex;
  align-items: center;
  flex: none;
  padding-left: 335px;
}
.fi-fx {
  margin-left: 28px;
  font-family: "Liberation Serif", serif;
  font-style: italic;
  font-size: 28px;
  line-height: 30px;
  color: #8a8a8a;
}
.fi-mask { margin-left: 31px; }
.fi-adj { margin-left: 31px; color: #dcdcdc; }
.fi-folder { margin-left: 29px; }
.fi-new { margin-left: 31px; }
.fi-trash { margin-left: 31px; }

/* floating tools panel */
.toolbar {
  position: absolute;
  left: 2px;
  top: 24px;
  width: 77px;
  height: 1425px;
  background: #535353;
  border-right: 2px solid #3c3c3c;
  border-radius: 3px 3px 0 0;
  display: flex;
  flex-direction: column;
}
.tb-head {
  height: 22px;
  background: #484848;
  border-bottom: 2px solid #3c3c3c;
  display: flex;
  align-items: center;
  justify-content: space-between;
  padding: 0 13px 0 17px;
  flex: none;
}
.tb-grip { height: 38px; padding: 6px 0 0 18px; flex: none; }
.tool {
  height: 52px;
  display: flex;
  align-items: center;
  justify-content: center;
  position: relative;
  flex: none;
  padding-right: 2px;
  color: #dcdcdc;
}
.tool.more::after {
  content: "";
  position: absolute;
  right: 9px;
  bottom: 6px;
  border-right: 6px solid #8c8c8c;
  border-top: 6px solid transparent;
}
.tool.on::before {
  content: "";
  position: absolute;
  left: 6px;
  right: 6px;
  top: 1px;
  bottom: 1px;
  background: #383838;
  border: 2px solid #626262;
  border-radius: 5px;
}
.tool svg { position: relative; }
.gradient-swatch {
  width: 32px;
  height: 24px;
  border: 2px solid #dcdcdc;
  background: linear-gradient(to right, #222, #bbb);
}
.tb-swap { height: 41px; padding: 10px 14px 0 8px; display: flex; justify-content: space-between; flex: none; }
.tb-colors { height: 60px; position: relative; flex: none; margin-bottom: 10px; }
.sw-fg.big { left: 8px; top: 2px; width: 38px; height: 38px; outline: 0; }
.sw-bg.big { left: 28px; top: 22px; width: 38px; height: 38px; }
```
